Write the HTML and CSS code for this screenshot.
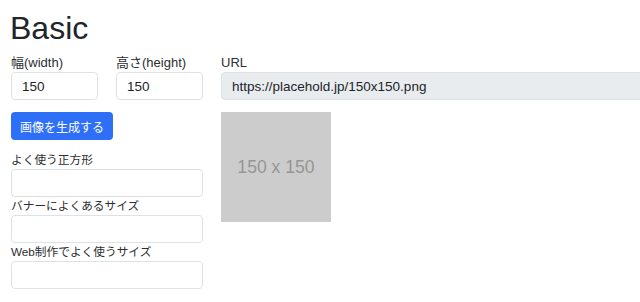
FILE: index.html
```html
<!DOCTYPE html>
<html lang="ja">
<head>
    <meta charset="UTF-8">
    <meta name="viewport" content="width=device-width, initial-scale=1.0">
    <title>Basic</title>
    <link rel="stylesheet" href="styles.css">
</head>
<body>
    <div class="container">
        <h1>Basic</h1>
        <div class="row">
            <div class="col-left">
                <div class="size-row">
                    <div class="field">
                        <label for="width">幅(width)</label>
                        <input type="text" id="width" value="150">
                    </div>
                    <div class="field">
                        <label for="height">高さ(height)</label>
                        <input type="text" id="height" value="150">
                    </div>
                </div>
                <button class="btn-primary">画像を生成する</button>
                <div class="presets">
                    <label class="ja">よく使う正方形</label>
                    <select></select>
                    <label class="ja">バナーによくあるサイズ</label>
                    <select></select>
                    <label class="ja">Web制作でよく使うサイズ</label>
                    <select></select>
                </div>
            </div>
            <div class="col-right">
                <label for="url">URL</label>
                <input type="text" id="url" class="url" value="https://placehold.jp/150x150.png" readonly>
                <div class="preview">150 x 150</div>
            </div>
        </div>
    </div>
</body>
</html>
```

FILE: styles.css
```css
body {
    margin: 0;
    font-family: "Liberation Sans", "Noto Sans CJK JP", sans-serif;
    font-size: 13px;
    color: #212529;
    background: #fff;
    overflow: hidden;
}

.container {
    padding: 9px 0 0 11px;
}

h1 {
    margin: 0 0 7px -1px;
    font-size: 32px;
    font-weight: 400;
    line-height: 38px;
}

.row {
    display: flex;
    gap: 18px;
}

.col-left {
    width: 192px;
    flex-shrink: 0;
}

.size-row {
    display: flex;
    gap: 18px;
}

.field {
    width: 87px;
}

label {
    display: block;
    height: 18px;
    line-height: 18px;
    color: #2b2f33;
    white-space: nowrap;
}

.ja {
    font-size: 11.7px;
}

input,
select {
    display: block;
    box-sizing: border-box;
    width: 100%;
    height: 28px;
    margin: 0;
    padding: 0 10px;
    font: inherit;
    font-size: 13.5px;
    color: #212529;
    background: #fff;
    border: 1px solid #dee2e6;
    border-radius: 4px;
    appearance: none;
}

.btn-primary {
    margin-top: 12px;
    height: 28px;
    padding: 0 9px;
    font-family: inherit;
    font-size: 12px;
    color: #fff;
    background: #2d6ff6;
    border: none;
    border-radius: 4px;
}

.presets {
    margin-top: 11px;
}

.col-right {
    flex-shrink: 0;
}

.url {
    width: 520px;
    background: #e9ecef;
}

.preview {
    display: flex;
    align-items: center;
    justify-content: center;
    width: 110px;
    height: 110px;
    margin-top: 12px;
    font-size: 17.6px;
    color: #969696;
    background: #cccccc;
}
```
